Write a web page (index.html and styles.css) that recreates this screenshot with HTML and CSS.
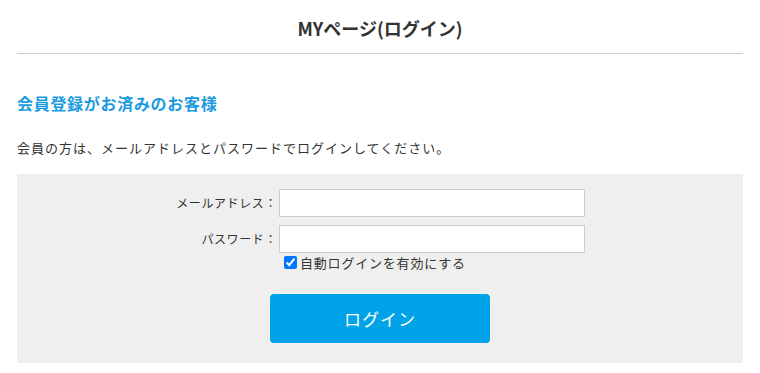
FILE: index.html
```html
<!DOCTYPE html>
<html lang="ja">
<head>
    <meta charset="UTF-8">
    <title>MYページ(ログイン)</title>
    <link rel="stylesheet" href="styles.css">
</head>
<body>

<div class="page">
    <h1 class="page-title">MYページ(ログイン)</h1>

    <h2 class="section-title">会員登録がお済みのお客様</h2>
    <p class="lead">会員の方は、メールアドレスとパスワードでログインしてください。</p>

    <form class="login-box" onsubmit="return false">
        <div class="field">
            <label for="login_email">メールアドレス：</label>
            <input type="text" id="login_email" name="login_email">
        </div>
        <div class="field">
            <label for="login_pass">パスワード：</label>
            <input type="password" id="login_pass" name="login_pass">
        </div>
        <div class="remember">
            <input type="checkbox" id="login_memory" name="login_memory" checked>
            <label for="login_memory">自動ログインを有効にする</label>
        </div>
        <div class="actions">
            <button type="submit">ログイン</button>
        </div>
    </form>
</div>

</body>
</html>
```

FILE: styles.css
```css
/* Base */
body {
    margin: 0;
    font-family: "Noto Sans CJK JP", "Noto Sans", sans-serif;
    color: #333;
    background: #fff;
}

.page {
    padding: 0 17px;
}

/* Title */
.page-title {
    margin: 0;
    padding: 16px 0 12px;
    font-size: 18px;
    line-height: 25px;
    font-weight: bold;
    text-align: center;
    border-bottom: 1px solid #ccc;
}

/* Section heading */
.section-title {
    margin: 38px 0 0;
    font-size: 16px;
    line-height: 22px;
    letter-spacing: 0.7px;
    color: #1a9be0;
    font-weight: bold;
}

.lead {
    margin: 24px 0 0;
    font-size: 13px;
    line-height: 20px;
    letter-spacing: 1px;
}

/* Login box */
.login-box {
    margin-top: 16px;
    background: #efefef;
    padding: 15px 0 20px;
}

.field {
    display: flex;
    align-items: center;
    margin-bottom: 8px;
}
.field label {
    width: 260px;
    padding-right: 2px;
    text-align: right;
    font-size: 12px;
    letter-spacing: 0.6px;
    margin-top: -2px;
}
.field input {
    width: 306px;
    height: 28px;
    box-sizing: border-box;
    border: 1px solid #ccc;
    background: #fff;
    margin: 0;
    outline: none;
}

.remember {
    display: flex;
    align-items: center;
    padding-left: 266px;
    margin-top: -8px;
    font-size: 13px;
    letter-spacing: 0.8px;
}
.remember input {
    width: 13px;
    height: 13px;
    margin: 0 3px 0 1px;
}

/* Button */
.actions {
    display: flex;
    justify-content: center;
    margin-top: 22px;
}
button {
    width: 220px;
    height: 49px;
    border: none;
    border-radius: 4px;
    background: #00a3e8;
    color: #fff;
    font-family: inherit;
    font-size: 17px;
    letter-spacing: 1px;
    cursor: pointer;
}
```
